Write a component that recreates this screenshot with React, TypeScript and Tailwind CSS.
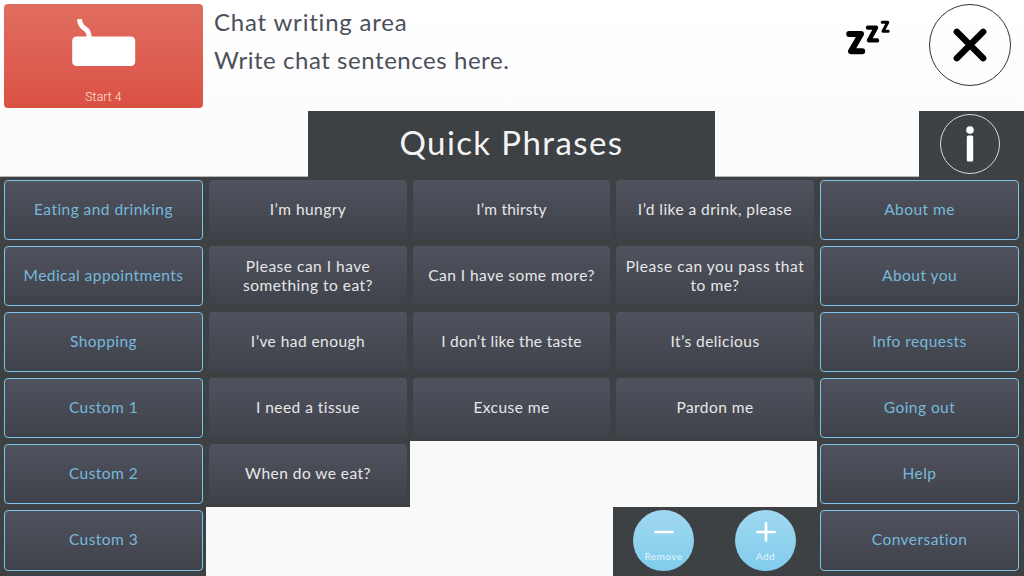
import clsx from 'clsx';

type Cell = {
  label: string;
  kind: 'category' | 'phrase' | 'empty';
  className?: string;
};

const rows: Cell[][] = [
  [
    { label: 'Eating and drinking', kind: 'category' },
    { label: 'I’m hungry', kind: 'phrase' },
    { label: 'I’m thirsty', kind: 'phrase', className: 'tracking-[0.2px]' },
    { label: 'I’d like a drink, please', kind: 'phrase' },
    { label: 'About me', kind: 'category' },
  ],
  [
    { label: 'Medical appointments', kind: 'category' },
    { label: 'Please can I have something to eat?', kind: 'phrase', className: 'px-7 tracking-[0.5px]' },
    { label: 'Can I have some more?', kind: 'phrase' },
    { label: 'Please can you pass that to me?', kind: 'phrase', className: 'tracking-[0.55px]' },
    { label: 'About you', kind: 'category' },
  ],
  [
    { label: 'Shopping', kind: 'category' },
    { label: 'I’ve had enough', kind: 'phrase' },
    { label: 'I don’t like the taste', kind: 'phrase', className: 'tracking-[0.3px]' },
    { label: 'It’s delicious', kind: 'phrase' },
    { label: 'Info requests', kind: 'category' },
  ],
  [
    { label: 'Custom 1', kind: 'category' },
    { label: 'I need a tissue', kind: 'phrase' },
    { label: 'Excuse me', kind: 'phrase' },
    { label: 'Pardon me', kind: 'phrase' },
    { label: 'Going out', kind: 'category' },
  ],
  [
    { label: 'Custom 2', kind: 'category' },
    { label: 'When do we eat?', kind: 'phrase' },
    { label: '', kind: 'empty' },
    { label: '', kind: 'empty' },
    { label: 'Help', kind: 'category' },
  ],
];

function GridCell({ cell, column, last }: { cell: Cell; column: number; last?: boolean }) {
  if (cell.kind === 'empty') {
    return <div className="bg-[#f9f9f9]" />;
  }
  return (
    <div
      className={clsx(
        'flex bg-[#3d4144] pt-[3px]',
        last ? 'pb-[5px]' : 'pb-[3px]',
        column === 0 && 'pr-[3px] pl-1',
        column > 0 && column < 4 && 'px-[3px]',
        column === 4 && 'pr-[5px] pl-[3px]'
      )}
    >
      <button
        className={clsx(
          'flex-1 rounded-[4px] bg-linear-to-b from-[#50535e] to-[#3f424a] px-1 text-center text-[15.5px] leading-[19px]',
          cell.kind === 'category' ? 'border border-[#7cc3e4] pb-[2px] text-[#76b9dc]' : 'text-[#e6e7e8]',
          cell.kind === 'phrase' && (cell.label.length > 26 ? 'pb-0' : 'pb-[2px]'),
          cell.className || 'tracking-[0.45px]'
        )}
      >
        {cell.label}
      </button>
    </div>
  );
}

function SleepIcon() {
  return (
    <svg
      viewBox="0 0 46 36"
      className="h-9 w-[46px]"
      fill="none"
      stroke="black"
      strokeLinecap="round"
      strokeLinejoin="round"
    >
      <path d="M4.2 14H16L6 31.2H17.2" strokeWidth="6" />
      <path d="M23 7.6H31L24 20.4H32" strokeWidth="4.4" />
      <path d="M37.2 2.3H42.8L38 11.3H43.2" strokeWidth="3" />
    </svg>
  );
}

function Header() {
  return (
    <header className="flex h-[111px] bg-linear-to-b from-white to-[#fcfcfc]">
      <button className="mt-1 ml-1 flex h-[104px] w-[199px] flex-col items-center rounded-[4px] bg-linear-to-b from-[#e06d60] to-[#da5144]">
        <svg viewBox="0 0 64 50" className="mt-[14px] h-[50px] w-16">
          <path
            d="M7.5 1.2C7.8 7 10 9.3 13.8 11.3C16.3 12.8 17.2 15 17.2 20"
            fill="none"
            stroke="white"
            strokeWidth="5"
          />
          <rect x="0.2" y="18.5" width="63" height="29.6" rx="4.2" fill="white" />
        </svg>
        <span className="mt-[21px] font-[Roboto] text-[12.2px] leading-4 font-light tracking-[0.1px] text-[#fbe1de]">
          Start 4
        </span>
      </button>
      <div className="ml-[11px] pt-[3px] text-[24px] leading-[37.5px] text-[#4b505a]">
        <p className="tracking-[0.8px]">Chat writing area</p>
        <p className="tracking-[0.55px]">Write chat sentences here.</p>
      </div>
      <div className="mt-[20px] mr-[38px] ml-auto">
        <SleepIcon />
      </div>
      <button className="mt-1 mr-[13px] flex size-[82px] items-center justify-center rounded-full border border-[#333]">
        <svg viewBox="0 0 34 34" className="size-[34px]" stroke="black" strokeWidth="6.4" strokeLinecap="round">
          <path d="M3.8 3.8L30.2 30.2M30.2 3.8L3.8 30.2" />
        </svg>
      </button>
    </header>
  );
}

function TitleBar() {
  return (
    <div className="flex h-[66px] bg-[#fcfcfc]">
      <div className="flex-1 border-b border-[#b4b6b8]" />
      <h1 className="w-[407px] bg-[#3d4144] pt-[12px] text-center text-[33px] leading-[38px] tracking-[1.4px] text-[#f4f4f4]">
        Quick Phrases
      </h1>
      <div className="w-[204px] border-b border-[#b4b6b8]" />
      <div className="w-[105px] bg-[#3d4144] pt-[3px] pl-[21px]">
        <button className="flex size-[60px] items-center justify-center rounded-full border border-[#d8d9da]">
          <svg viewBox="0 0 8 36" className="h-9 w-2" fill="white">
            <circle cx="4" cy="4" r="3.8" />
            <rect x="0.8" y="9.4" width="6.4" height="26" rx="1.5" />
          </svg>
        </button>
      </div>
    </div>
  );
}

function RoundButton({ label, plus }: { label: string; plus?: boolean }) {
  return (
    <button className="flex size-[61px] flex-col items-center rounded-full bg-linear-to-b from-[#a0d8f0] to-[#80ccec]">
      <svg
        viewBox="0 0 20 20"
        className="mt-[12px] size-5"
        stroke="white"
        strokeWidth="2.7"
        strokeLinecap="round"
      >
        <path d={plus ? 'M1.4 10H18.6M10 1.4V18.6' : 'M1.4 10H18.6'} />
      </svg>
      <span className="mt-[8px] text-[10.3px] leading-3 tracking-[0.3px] text-[#e4f5fd]">{label}</span>
    </button>
  );
}

export default function App() {
  return (
    <div className="h-[576px] w-[1024px] overflow-hidden bg-[#f9f9f9] font-[Lato,sans-serif]">
      <Header />
      <TitleBar />
      <main className="grid grid-cols-[206px_204px_203px_204px_207px] grid-rows-[repeat(5,66px)_69px]">
        {rows.map((row, r) =>
          row.map((cell, c) => <GridCell key={`${r}-${c}`} cell={cell} column={c} />)
        )}
        <GridCell cell={{ label: 'Custom 3', kind: 'category' }} column={0} last />
        <div className="col-span-2 bg-[#f9f9f9]" />
        <div className="flex gap-[41px] bg-[#3d4144] pt-[3px] pl-5">
          <RoundButton label="Remove" />
          <RoundButton label="Add" plus />
        </div>
        <GridCell cell={{ label: 'Conversation', kind: 'category' }} column={4} last />
      </main>
    </div>
  );
}
